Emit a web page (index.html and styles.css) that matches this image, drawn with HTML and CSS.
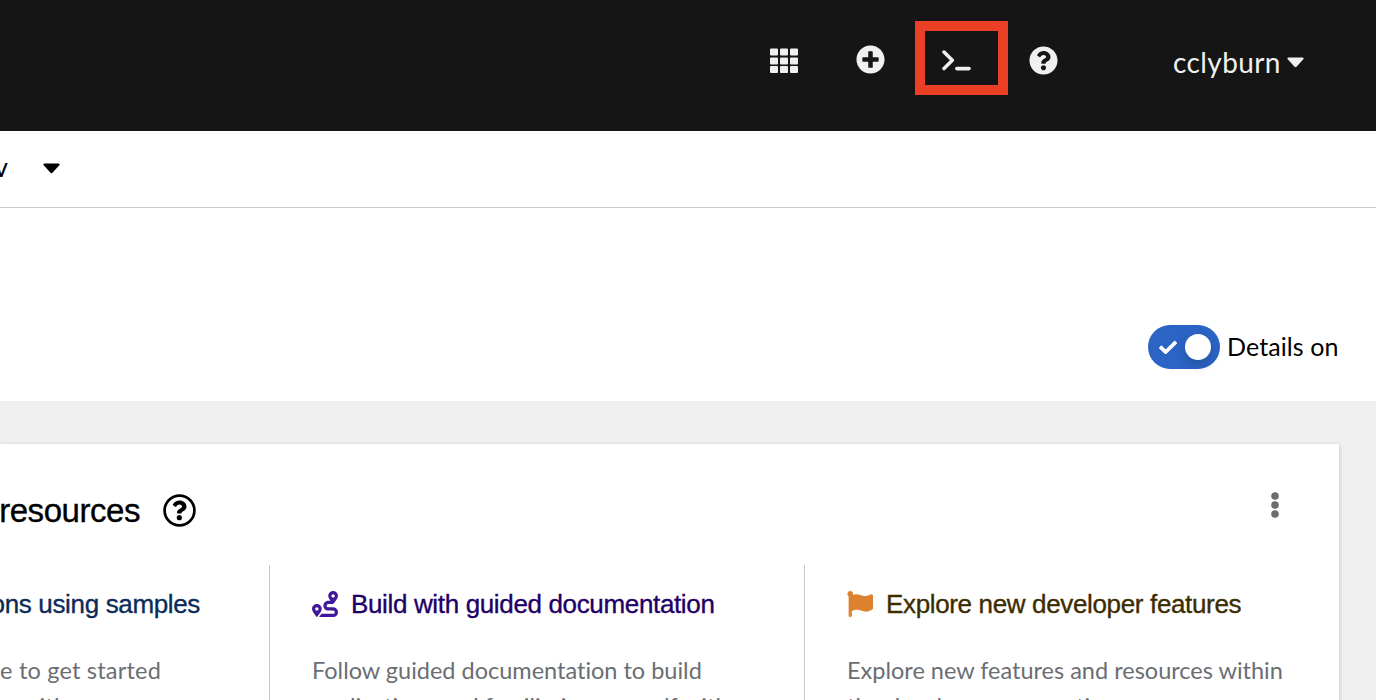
FILE: index.html
```html
<!DOCTYPE html>
<html lang="en">
<head>
<meta charset="utf-8">
<title>Developer console</title>
<link rel="stylesheet" href="styles.css">
</head>
<body>
<header class="masthead">
  <svg class="icon-grid" width="28" height="26" viewBox="0 0 28 26" fill="#f0f0f0"><rect x="0" y="0.5" width="8" height="7" rx="1"/><rect x="10" y="0.5" width="8" height="7" rx="1"/><rect x="20" y="0.5" width="8" height="7" rx="1"/><rect x="0" y="9.5" width="8" height="7" rx="1"/><rect x="10" y="9.5" width="8" height="7" rx="1"/><rect x="20" y="9.5" width="8" height="7" rx="1"/><rect x="0" y="18" width="8" height="7" rx="1"/><rect x="10" y="18" width="8" height="7" rx="1"/><rect x="20" y="18" width="8" height="7" rx="1"/></svg>
  <svg class="icon-plus" width="29" height="29" viewBox="0 0 512 512" fill="#f0f0f0"><path d="M256 8C119 8 8 119 8 256s111 248 248 248 248-111 248-248S393 8 256 8zm144 276c0 6.600-5.400 12-12 12h-92v92c0 6.600-5.400 12-12 12h-56c-6.600 0-12-5.400-12-12v-92h-92c-6.600 0-12-5.400-12-12v-56c0-6.600 5.400-12 12-12h92v-92c0-6.600 5.400-12 12-12h56c6.600 0 12 5.400 12 12v92h92c6.600 0 12 5.400 12 12v56z"/></svg>
  <div class="terminal">
    <svg width="30" height="22" viewBox="0 0 30 22" fill="none" stroke="#f0f0f0"><path d="M3 2L11.300 10.300L3 18.600" stroke-width="3.500" stroke-linecap="round" stroke-linejoin="round"/><path d="M15.800 18.600H28" stroke-width="3.600" stroke-linecap="round"/></svg>
  </div>
  <svg class="icon-help" width="29" height="29" viewBox="0 0 512 512" fill="#f0f0f0"><path d="M504 256c0 136.997-111.043 248-248 248S8 392.997 8 256C8 119.083 119.043 8 256 8s248 111.083 248 248zM262.655 90c-54.497 0-89.255 22.957-116.549 63.758-3.536 5.286-2.353 12.415 2.715 16.258l34.699 26.310c5.205 3.947 12.621 3.008 16.665-2.122 17.864-22.658 30.113-35.797 57.303-35.797 20.429 0 45.698 13.148 45.698 32.958 0 14.976-12.363 22.667-32.534 33.976C247.128 238.528 216 254.941 216 296v4c0 6.627 5.373 12 12 12h56c6.627 0 12-5.373 12-12v-1.333c0-28.462 83.186-29.647 83.186-106.667 0-58.002-60.165-102-116.531-102zM256 338c-25.365 0-46 20.635-46 46 0 25.364 20.635 46 46 46s46-20.636 46-46c0-25.365-20.635-46-46-46z"/></svg>
  <div class="user"><span class="user-name">cclyburn</span><svg width="17" height="11" viewBox="0 0 17 11" fill="#f0f0f0"><path d="M1.200 0.500H15.800Q17.200 1 16.300 2.300L9.500 9.800Q8.500 10.700 7.500 9.800L.7 2.300Q-.2 1 1.200.5Z"/></svg></div>
</header>
<div class="project-bar">
  <span class="project">v</span>
  <svg width="17" height="11" viewBox="0 0 17 11"><path d="M1.200 0.500H15.800Q17.200 1 16.300 2.300L9.500 9.800Q8.500 10.700 7.500 9.800L.7 2.300Q-.2 1 1.200.5Z"/></svg>
</div>
<div class="page-head">
  <div class="switch"><svg width="18" height="14" viewBox="0 0 18 14" fill="none" stroke="#fff" stroke-width="3.800"><path d="M1 6.700L6.600 12L17 1.800"/></svg><span class="knob"></span></div>
  <span class="switch-label">Details on</span>
</div>
<main class="content">
  <section class="card">
    <div class="card-head">
      <h2 class="card-title">resources</h2>
      <svg class="title-help" width="33" height="33" viewBox="0 0 33 33"><circle cx="16.500" cy="16.500" r="14.900" fill="none" stroke="#000" stroke-width="2.700"/><path transform="translate(1.500 1.400) scale(.058)" d="M262.655 90c-54.497 0-89.255 22.957-116.549 63.758-3.536 5.286-2.353 12.415 2.715 16.258l34.699 26.310c5.205 3.947 12.621 3.008 16.665-2.122 17.864-22.658 30.113-35.797 57.303-35.797 20.429 0 45.698 13.148 45.698 32.958 0 14.976-12.363 22.667-32.534 33.976C247.128 238.528 216 254.941 216 296v4c0 6.627 5.373 12 12 12h56c6.627 0 12-5.373 12-12v-1.333c0-28.462 83.186-29.647 83.186-106.667 0-58.002-60.165-102-116.531-102zM256 338c-25.365 0-46 20.635-46 46 0 25.364 20.635 46 46 46s46-20.636 46-46c0-25.365-20.635-46-46-46z"/></svg>
      <svg class="kebab" width="8" height="26" viewBox="0 0 8 26" fill="#6a6e73"><circle cx="4" cy="4" r="3.800"/><circle cx="4" cy="13" r="3.800"/><circle cx="4" cy="22" r="3.800"/></svg>
    </div>
    <div class="columns">
      <article class="col samples">
        <h3 class="col-title">ons using samples</h3>
        <p class="desc"><span class="line">e to get started</span><span class="line end">with.</span></p>
      </article>
      <article class="col guided">
        <h3 class="col-title"><svg width="26" height="26" viewBox="0 0 512 512" fill="#40199a"><path d="M416 320h-96c-17.600 0-32-14.400-32-32s14.400-32 32-32h96s96-107 96-160-43-96-96-96-96 43-96 96c0 25.500 22.200 63.400 45.300 96H320c-52.900 0-96 43.100-96 96s43.100 96 96 96h96c17.600 0 32 14.400 32 32s-14.400 32-32 32H185.500c-16 24.800-33.800 47.700-47.300 64H416c52.900 0 96-43.100 96-96s-43.100-96-96-96zm0-256c17.700 0 32 14.300 32 32s-14.300 32-32 32-32-14.300-32-32 14.300-32 32-32zM96 256c-53 0-96 43-96 96s96 160 96 160 96-107 96-160-43-96-96-96zm0 128c-17.700 0-32-14.300-32-32s14.300-32 32-32 32 14.300 32 32-14.300 32-32 32z"/></svg><span>Build with guided documentation</span></h3>
        <p class="desc"><span class="line">Follow guided documentation to build</span><span class="line">applications and familiarize yourself with</span></p>
      </article>
      <article class="col features">
        <h3 class="col-title"><svg width="26" height="26" viewBox="0 0 512 512" fill="#dd8230"><path d="M349.565 98.783C295.978 98.783 251.721 64 184.348 64c-24.955 0-47.309 4.384-68.045 12.013a55.947 55.947 0 0 0 3.586-23.562C118.117 24.015 94.806 1.206 66.338.048 34.345-1.254 8 24.296 8 56c0 19.026 9.497 35.825 24 45.945V488c0 13.255 10.745 24 24 24h16c13.255 0 24-10.745 24-24v-94.400c28.311-12.064 63.582-22.122 114.435-22.122 53.588 0 97.844 34.783 165.217 34.783 48.169 0 86.667-16.294 122.505-40.858C506.840 359.452 512 349.571 512 339.045v-243.100c0-23.393-24.269-38.870-45.485-29.016-34.338 15.948-76.454 31.854-116.950 31.854z"/></svg><span>Explore new developer features</span></h3>
        <p class="desc"><span class="line">Explore new features and resources within</span><span class="line">the developer perspective.</span></p>
      </article>
    </div>
  </section>
</main>
</body>
</html>
```
FILE: styles.css
```css
* { box-sizing: border-box; }
html, body { height: 100%; }
body { margin: 0; overflow: hidden; display: flex; flex-direction: column; background: #fff; color: #000; font-family: Lato, "Liberation Sans", sans-serif; font-size: 25px; font-variant-ligatures: none; white-space: nowrap; }
svg { display: block; flex: none; }
h2, h3, p { margin: 0; font-weight: 400; }
.masthead { flex: none; height: 131px; background: #151515; display: flex; align-items: flex-start; padding-left: 770px; color: #f0f0f0; }
.icon-grid { margin-top: 48px; }
.icon-plus { margin: 45px 0 0 58px; }
.terminal { width: 93px; height: 74px; margin: 21px 0 0 30px; border: 10px solid #eb4025; padding: 19px 0 0 16px; }
.icon-help { margin: 46px 0 0 21px; }
.user { display: flex; align-items: center; gap: 6px; margin: 44px 0 0 115px; height: 37px; }
.user-name { width: 108px; font-size: 28px; letter-spacing: .4px; padding-bottom: 2px; }
.project-bar { flex: none; height: 77px; border-bottom: 1px solid #c8c8c8; display: flex; align-items: center; gap: 35px; padding-bottom: 1px; }
.project { width: 8px; display: flex; justify-content: flex-end; font-size: 26px; padding-bottom: 3px; }
.page-head { flex: none; height: 193px; padding: 117px 38px 0 0; display: flex; justify-content: flex-end; gap: 7px; }
.switch { width: 72px; height: 44px; border-radius: 22px; background: #2b64c5; display: flex; align-items: center; justify-content: space-between; padding: 0 9px 0 11px; }
.knob { width: 26px; height: 26px; border-radius: 50%; background: #fff; box-shadow: 0 5px 12px rgba(0,0,0,.18); }
.switch-label { width: 111px; line-height: 42px; letter-spacing: .1px; }
.content { flex: 1; min-height: 0; background: #efefef; padding: 43px 37px 0 0; overflow: hidden; }
.card { height: 300px; background: #fff; box-shadow: 0 1px 4px rgba(0,0,0,.22); }
.card-head { height: 121px; display: flex; align-items: flex-start; }
.card-title { width: 140px; padding-top: 48px; display: flex; justify-content: flex-end; font: 400 33px/38px "Liberation Sans", Arial, sans-serif; letter-spacing: -.45px; -webkit-text-stroke: .35px; }
.title-help { margin: 50px 0 0 23px; }
.kebab { margin: 48px 60px 0 auto; }
.columns { display: grid; grid-template-columns: 270px 535px 1fr; height: 179px; }
.col { border-right: 1px solid #c7c7c7; padding: 20px 0 0 42px; }
.col:last-child { border-right: 0; }
.samples { padding-left: 0; }
.col-title { display: flex; align-items: center; gap: 13px; height: 38px; font: 400 26px/38px "Liberation Sans", Arial, sans-serif; letter-spacing: -.35px; -webkit-text-stroke: .35px; }
.samples .col-title { width: 200px; justify-content: flex-end; color: #0b2b58; }
.guided .col-title { color: #1f0066; }
.features .col-title { color: #3d2c00; }
.desc { margin-top: 29px; color: #6a6e73; font-size: 23.500px; line-height: 36px; }
.line { display: block; }
.samples .line { width: 161px; display: flex; justify-content: flex-end; letter-spacing: .2px; }
.samples .end { width: 73px; }
```
